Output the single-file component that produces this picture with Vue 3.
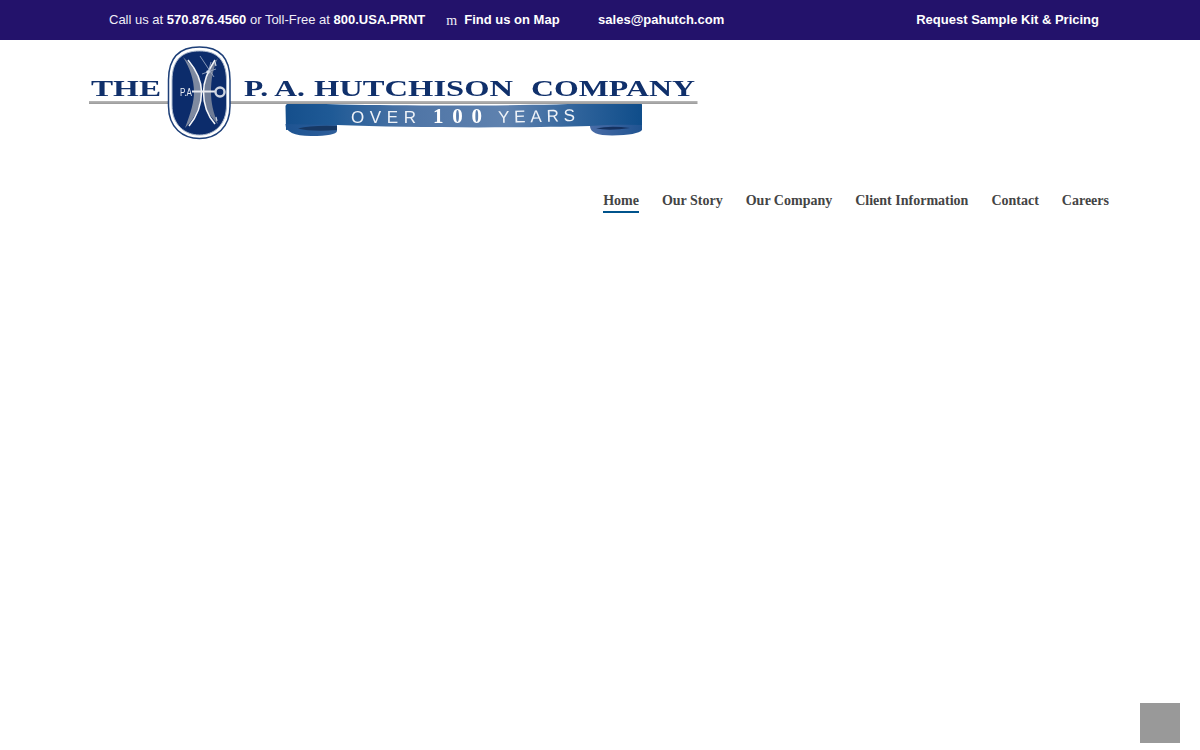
<script setup>
const navItems = ['Home', 'Our Story', 'Our Company', 'Client Information', 'Contact', 'Careers']
</script>

<template>
  <div class="page">
    <div class="topbar">
      <div class="contact">Call us at <b>570.876.4560</b> or Toll-Free at <b>800.USA.PRNT</b></div>
      <div class="map"><span class="glyph">m</span><b>Find us on Map</b></div>
      <div class="mail"><b>sales@pahutch.com</b></div>
      <div class="sample"><b>Request Sample Kit &amp; Pricing</b></div>
    </div>

    <div class="logo-row">
      <svg class="logo" width="640" height="110" viewBox="0 0 640 110" role="img" aria-label="The P. A. Hutchison Company">
        <defs>
          <linearGradient id="ribbon" x1="0" x2="1" y1="0" y2="0">
            <stop offset="0" stop-color="#154f8c" />
            <stop offset="0.13" stop-color="#1f5a96" />
            <stop offset="0.35" stop-color="#4f75a6" />
            <stop offset="0.62" stop-color="#5f82af" />
            <stop offset="0.82" stop-color="#2f639b" />
            <stop offset="1" stop-color="#0f4d8a" />
          </linearGradient>
          <linearGradient id="bar" x1="0" x2="0" y1="0" y2="1">
            <stop offset="0" stop-color="#b8b8b8" />
            <stop offset="1" stop-color="#9a9a9a" />
          </linearGradient>
          <linearGradient id="curlL" x1="0" x2="1" y1="0" y2="0">
            <stop offset="0" stop-color="#1d5391" />
            <stop offset="1" stop-color="#2f5f9b" />
          </linearGradient>
          <linearGradient id="curlR" x1="0" x2="1" y1="0" y2="0">
            <stop offset="0" stop-color="#4a6ca6" />
            <stop offset="1" stop-color="#1f5391" />
          </linearGradient>
        </defs>

        <!-- ribbon -->
        <path d="M205.500 66 Q206 63 212 63 C226 63 240 64 260 64.500 C340 66 450 66 520 63 C535 62 550 62 559 62 Q562 62 562 65 L562 88 Q562 91 558 91 L510 86 C440 88 330 88 257 85 L206 90 Z" fill="url(#ribbon)" />
        <path d="M205.500 84 Q205.500 96 231 96 Q256 96 257 91 L257 85 Q230 85 205.500 84 Z" fill="url(#curlL)" />
        <path d="M218 88.500 Q232 85 257 86 L257 90 Q232 92 218 88.500 Z" fill="#173864" />
        <path d="M510 86 Q510 95.500 532 95.500 Q558 95 562 90 L562 85 Q535 84 510 86 Z" fill="url(#curlR)" />
        <path d="M516 88.500 Q530 85.500 550 88 Q530 91 516 88.500 Z" fill="#15315f" />

        <!-- rule -->
        <rect x="9" y="61" width="608.500" height="3" fill="url(#bar)" />

        <!-- wordmark -->
        <text x="11" y="56" class="serif" font-size="23" textLength="70" lengthAdjust="spacingAndGlyphs">THE</text>
        <text x="164" y="56" class="serif" font-size="23" textLength="61" lengthAdjust="spacingAndGlyphs">P. A.</text>
        <text x="234" y="56" class="serif" font-size="23" textLength="199" lengthAdjust="spacingAndGlyphs">HUTCHISON</text>
        <text x="451" y="56" class="serif" font-size="23" textLength="164" lengthAdjust="spacingAndGlyphs">COMPANY</text>

        <text x="271" y="83" class="ribbon-text" font-size="17" textLength="65" lengthAdjust="spacing">OVER</text>
        <text x="353" y="83" class="ribbon-text strong" font-size="21" textLength="49" lengthAdjust="spacing">100</text>
        <text x="418" y="82" class="ribbon-text" font-size="17" textLength="77" lengthAdjust="spacing" transform="rotate(-1.500 456 77)">YEARS</text>

        <!-- emblem -->
        <path d="M119.500 7 C136 7 150 14 150 40 L150 66 C150 88 136 98.500 119.500 98.500 C103 98.500 88.500 88 88.500 66 L88.500 40 C88.500 14 103 7 119.500 7 Z" fill="#fff" stroke="#1d3f78" stroke-width="1.500" />
        <path d="M119.500 11 C134 11 146.500 17 146.500 41 L146.500 65 C146.500 85 134 95 119.500 95 C105 95 92 85 92 65 L92 41 C92 17 105 11 119.500 11 Z" fill="#0c2c6b" stroke="#a8b6cc" stroke-width="1" />
        <path d="M103 17 C117 30 121 42 121 52 C121 64 117 76 105 88 C111 72 114 62 114 52 C114 40 110 28 103 17 Z" fill="#7f8aa0" />
        <path d="M108 20 C118 32 121.500 42 121.500 52 C121.500 64 118 75 109 86" fill="none" stroke="#f4f5f8" stroke-width="1.600" />
        <path d="M138 18 C127 30 124 42 124 52 C124 64 127 74 138 84 C133 72 131 62 131 52 C131 40 133 28 138 18 Z" fill="#6f7c96" />
        <path d="M135 20 C127 32 123.500 42 123.500 52 C123.500 64 127 75 135 84" fill="none" stroke="#f4f5f8" stroke-width="1.600" />
        <path d="M112 51.500 H135" stroke="#e7e9ef" stroke-width="2" />
        <circle cx="140" cy="52" r="4.500" fill="none" stroke="#cfd5e0" stroke-width="2.400" />
        <path d="M120 16 L134 37 M128 33 L131 22 M122 34 L136 29" stroke="#aab6cc" stroke-width="0.800" />
        <circle cx="128" cy="32" r="1.800" fill="#dfe5ef" />
        <path d="M135 22 L136 26 M136 77 L137 81" stroke="#c8d0de" stroke-width="1.200" />
        <text x="100" y="56" class="mono-text" font-size="11" textLength="12" lengthAdjust="spacingAndGlyphs">P.A</text>
      </svg>
    </div>

    <nav class="nav">
      <a v-for="(item, i) in navItems" :key="item" class="nav-item" :class="{ active: i === 0 }">{{ item }}</a>
    </nav>

    <div class="to-top"></div>
  </div>
</template>

<style>
html, body {
  margin: 0;
  background: #fff;
}
</style>

<style scoped>
.page {
  height: 750px;
  overflow: hidden;
  position: relative;
  background: #fff;
}
.topbar {
  height: 40px;
  background: #23126b;
  color: #f0eef7;
  font: 13px/39px "Liberation Sans", Arial, sans-serif;
  display: flex;
  padding: 0 101px 0 109px;
  white-space: nowrap;
}
.topbar b {
  color: #fff;
  font-weight: 700;
}
.map {
  margin-left: 21px;
  display: flex;
}
.glyph {
  font: 14px/41px "Liberation Serif", serif;
  width: 18px;
}
.mail {
  margin-left: 38.500px;
}
.sample {
  margin-left: auto;
}
.logo-row {
  height: 110px;
  padding-left: 80px;
}
.logo {
  display: block;
  filter: blur(0.3px);
}
.serif {
  font-family: "Liberation Serif", serif;
  font-weight: 700;
  fill: #10306b;
}
.ribbon-text {
  font-family: "Liberation Sans", sans-serif;
  fill: #eef2f8;
}
.strong {
  font-family: "Liberation Serif", serif;
  font-weight: 700;
  fill: #fff;
}
.mono-text {
  font-family: "Liberation Sans", sans-serif;
  fill: #e8ebf2;
}
.nav {
  display: flex;
  justify-content: flex-end;
  gap: 23px;
  padding: 41px 91px 0 0;
}
.nav-item {
  font: 700 14px/20px "Liberation Serif", serif;
  color: #444;
  border-bottom: 2px solid transparent;
}
.nav-item.active {
  border-bottom-color: #00538c;
}
.to-top {
  position: absolute;
  right: 20px;
  bottom: 7px;
  width: 40px;
  height: 40px;
  background: #999;
}
</style>
